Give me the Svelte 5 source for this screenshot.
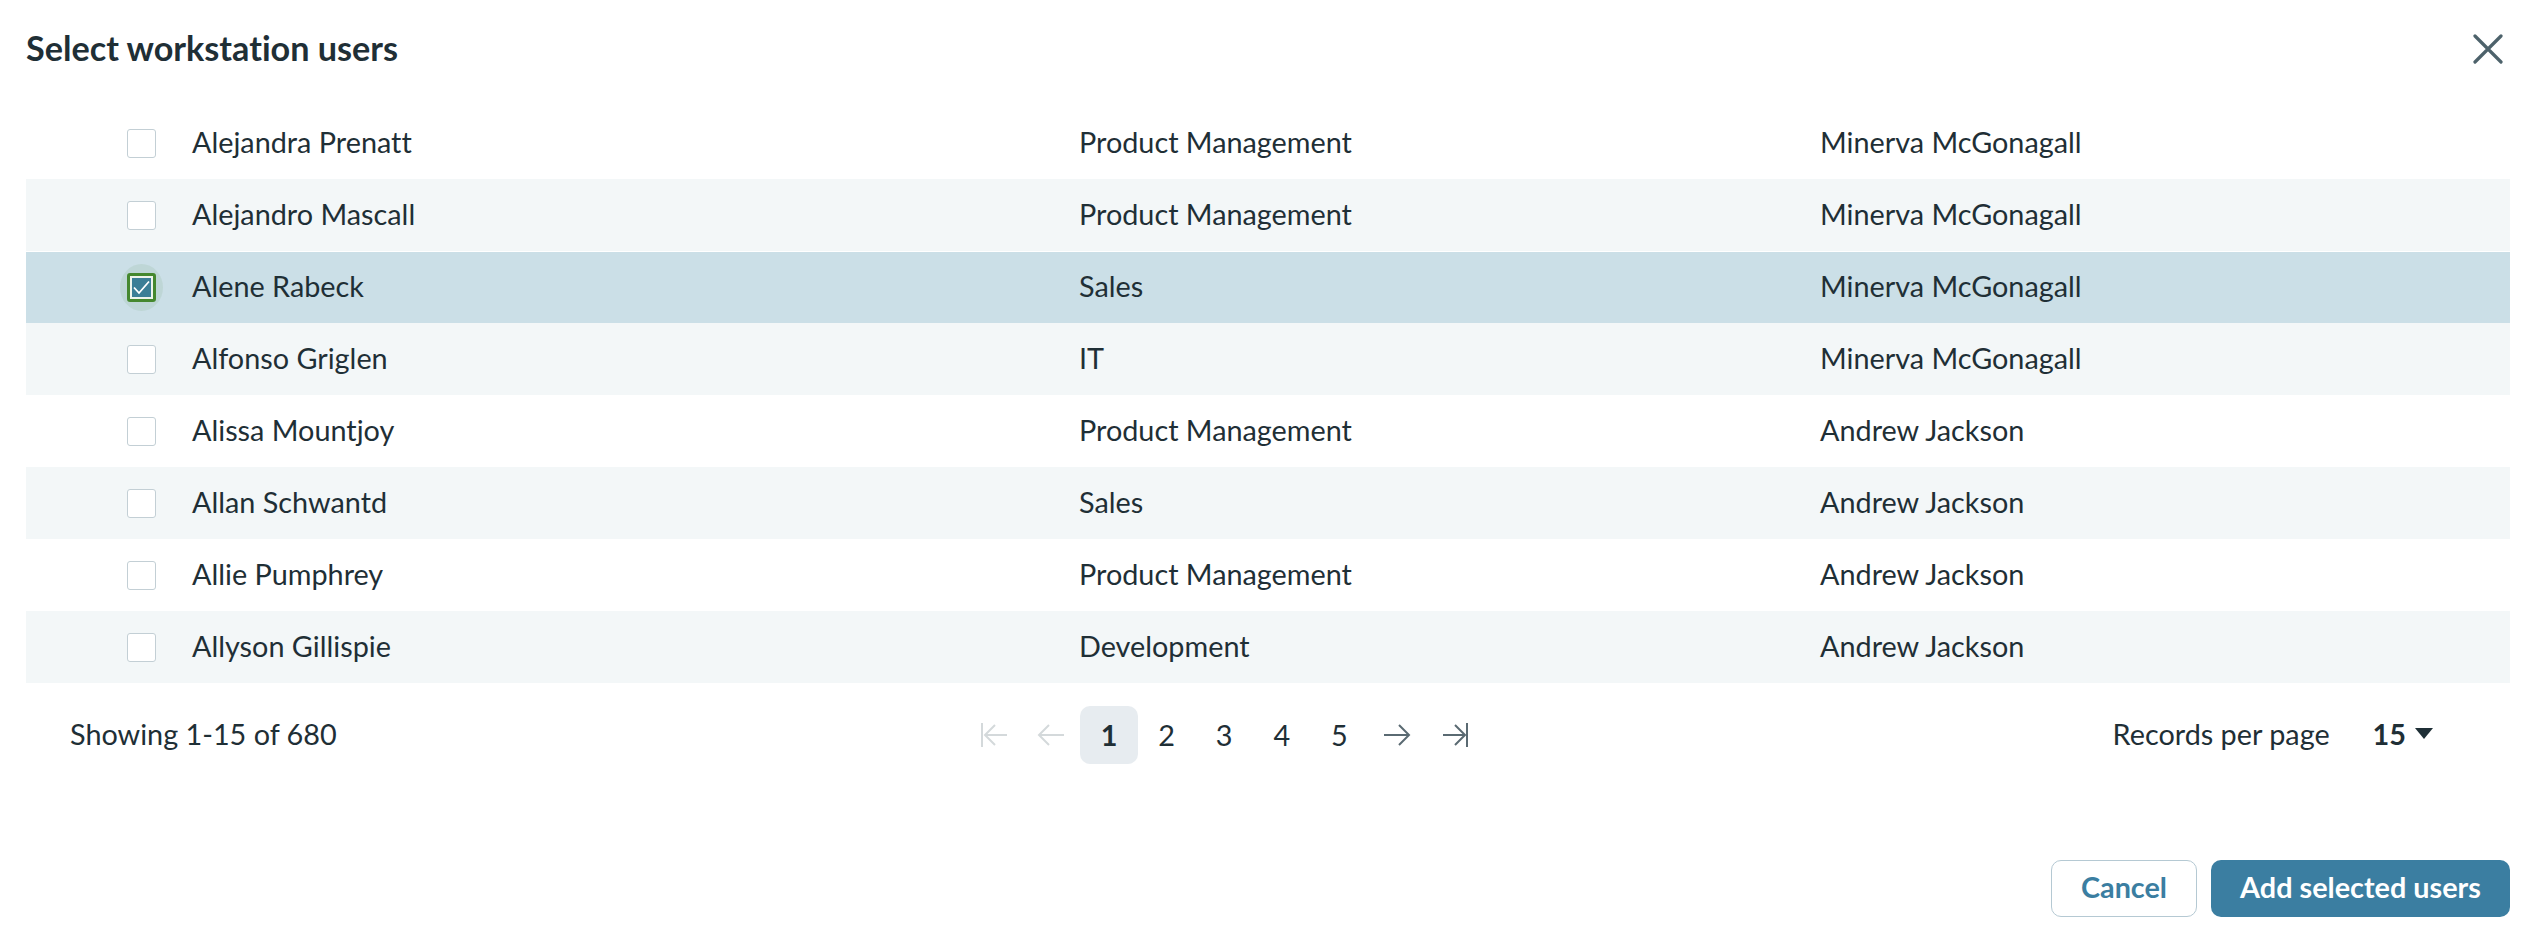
<script>
  const users = [
    { name: "Alejandra Prenatt", dept: "Product Management", manager: "Minerva McGonagall" },
    { name: "Alejandro Mascall", dept: "Product Management", manager: "Minerva McGonagall" },
    { name: "Alene Rabeck", dept: "Sales", manager: "Minerva McGonagall", selected: true },
    { name: "Alfonso Griglen", dept: "IT", manager: "Minerva McGonagall" },
    { name: "Alissa Mountjoy", dept: "Product Management", manager: "Andrew Jackson" },
    { name: "Allan Schwantd", dept: "Sales", manager: "Andrew Jackson" },
    { name: "Allie Pumphrey", dept: "Product Management", manager: "Andrew Jackson" },
    { name: "Allyson Gillispie", dept: "Development", manager: "Andrew Jackson" },
  ];
  const pages = [1, 2, 3, 4, 5];
</script>

<div class="dialog">
  <header class="head">
    <h1>Select workstation users</h1>
    <button class="close" aria-label="Close">
      <svg width="30" height="30" viewBox="0 0 30 30">
        <path d="M2 2 L28 28 M28 2 L2 28" />
      </svg>
    </button>
  </header>

  <div class="table">
    {#each users as user}
      <div class="row" class:selected={user.selected}>
        <span class="check">
          {#if user.selected}
            <svg width="19" height="19" viewBox="0 0 19 19">
              <path d="M2 9.5 L7 15 L17 3.5" />
            </svg>
          {/if}
        </span>
        <span class="txt">{user.name}</span>
        <span class="txt">{user.dept}</span>
        <span class="txt">{user.manager}</span>
      </div>
    {/each}
  </div>

  <div class="footer">
    <div class="txt">Showing 1-15 of 680</div>
    <nav class="pager">
      <span class="cell off">
        <svg width="28" height="26" viewBox="0 0 28 26"><path d="M2 1 V25 M27 13 H5 M15 3 L5 13 L15 23" /></svg>
      </span>
      <span class="cell off">
        <svg width="28" height="26" viewBox="0 0 28 26"><path d="M27 13 H2 M12 3 L2 13 L12 23" /></svg>
      </span>
      {#each pages as page}
        <span class="cell" class:current={page === 1}>{page}</span>
      {/each}
      <span class="cell on">
        <svg width="28" height="26" viewBox="0 0 28 26"><path d="M1 13 H26 M16 3 L26 13 L16 23" /></svg>
      </span>
      <span class="cell on">
        <svg width="28" height="26" viewBox="0 0 28 26"><path d="M2 13 H24 M14 3 L24 13 L14 23 M26 1 V25" /></svg>
      </span>
    </nav>
    <div class="per-page txt">
      <span>Records per page</span>
      <strong>15</strong>
      <i class="caret"></i>
    </div>
  </div>

  <div class="actions">
    <button class="btn cancel">Cancel</button>
    <button class="btn primary">Add selected users</button>
  </div>
</div>

<style>
  :global(body) {
    margin: 0;
    background: #fff;
  }

  .dialog {
    width: 2536px;
    height: 942px;
    box-sizing: border-box;
    padding: 0 26px;
    font-family: Lato, "Liberation Sans", sans-serif;
    font-size: 28.8px;
    font-variant-ligatures: none;
    color: #1f2f36;
    display: flex;
    flex-direction: column;
  }

  .head {
    height: 107px;
    display: flex;
    justify-content: space-between;
    align-items: flex-start;
  }

  h1 {
    margin: 28px 0 0 0;
    font-size: 34.2px;
    line-height: 40px;
    font-weight: 700;
  }

  .close {
    margin: 34px 7px 0 0;
    padding: 0;
    border: 0;
    background: none;
    line-height: 0;
  }

  .close path {
    fill: none;
    stroke: #4d626b;
    stroke-width: 3.2;
    stroke-linecap: round;
  }

  .row {
    height: 72px;
    box-sizing: border-box;
    padding-left: 101px;
    display: grid;
    grid-template-columns: 65px 887px 741px 1fr;
    align-items: center;
  }

  .row:nth-child(even) {
    background: #f3f7f8;
  }

  .row.selected {
    background: #cbdfe7;
    border-top: 1px solid #fff;
  }

  .txt {
    padding-bottom: 3px;
  }

  .check {
    position: relative;
    width: 29px;
    height: 29px;
    box-sizing: border-box;
    border: 1.5px solid #c3cfd5;
    border-radius: 3px;
    background: #fff;
  }

  .selected .check {
    border: 3.5px solid #46892f;
    background: #3b7ea1;
    box-shadow: inset 0 0 0 2px #fff;
  }

  .selected .check::before {
    content: "";
    position: absolute;
    left: -10.5px;
    top: -12.5px;
    width: 43px;
    height: 47px;
    border-radius: 50%;
    background: #46892f;
    opacity: 0.09;
  }

  .check svg {
    position: absolute;
    left: 1.5px;
    top: 1.5px;
  }

  .check path {
    fill: none;
    stroke: #fff;
    stroke-width: 1.8;
  }

  .footer {
    height: 104px;
    box-sizing: border-box;
    padding: 0 77px 0 44px;
    display: grid;
    grid-template-columns: 895px auto 1fr;
    align-items: center;
  }

  .pager {
    display: flex;
    gap: 0;
  }

  .cell {
    width: 57.6px;
    height: 58px;
    display: flex;
    align-items: center;
    justify-content: center;
    border-radius: 10px;
  }

  .cell.current {
    background: #e7ecf0;
    font-weight: 700;
  }

  .cell path {
    fill: none;
    stroke-width: 2;
  }

  .off path {
    stroke: #d4d9db;
  }

  .on path {
    stroke: #5a6a72;
  }

  .per-page {
    display: flex;
    justify-content: flex-end;
    align-items: center;
  }

  .per-page strong {
    margin-left: 43px;
    font-weight: 700;
  }

  .caret {
    margin-left: 9px;
    border-left: 9.5px solid transparent;
    border-right: 9.5px solid transparent;
    border-top: 11px solid #1f2f36;
  }

  .actions {
    margin-top: 73px;
    display: flex;
    justify-content: flex-end;
    gap: 14px;
  }

  .btn {
    height: 57px;
    box-sizing: border-box;
    border-radius: 10px;
    font-family: inherit;
    font-size: 28.8px;
    font-variant-ligatures: none;
    font-weight: 700;
    padding: 0 0 3px;
  }

  .cancel {
    width: 146px;
    background: #fff;
    border: 1.5px solid #b5c9d3;
    color: #3b7ea1;
  }

  .primary {
    width: 299px;
    background: #3b7ea1;
    border: 0;
    color: #fff;
  }
</style>
